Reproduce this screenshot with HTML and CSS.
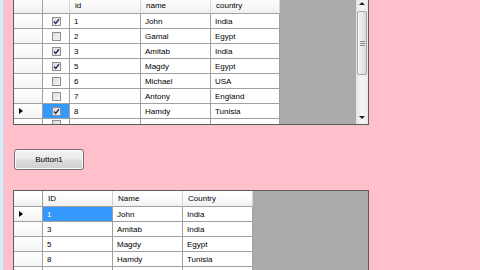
FILE: index.html
```html
<!DOCTYPE html>
<html>
<head>
<meta charset="utf-8">
<link rel="stylesheet" href="styles.css">
</head>
<body>
<div class="frame">
  <div class="content">
    <div class="dgv top">
      <div class="dgv-body">
        <div class="row hdr">
          <div class="c rh"></div><div class="c chk"></div><div class="c w-id">id</div><div class="c w-name">name</div><div class="c w-country">country</div>
        </div>
        <div class="row"><div class="c rh"></div><div class="c chk"><span class="cb on"><svg viewBox="0 0 9 9" width="9" height="9"><path d="M2 4.6 L3.7 6.4 L7 2.2" /></svg></span></div><div class="c w-id">1</div><div class="c w-name">John</div><div class="c w-country">India</div></div>
        <div class="row"><div class="c rh"></div><div class="c chk"><span class="cb"></span></div><div class="c w-id">2</div><div class="c w-name">Gamal</div><div class="c w-country">Egypt</div></div>
        <div class="row"><div class="c rh"></div><div class="c chk"><span class="cb on"><svg viewBox="0 0 9 9" width="9" height="9"><path d="M2 4.6 L3.7 6.4 L7 2.2" /></svg></span></div><div class="c w-id">3</div><div class="c w-name">Amitab</div><div class="c w-country">India</div></div>
        <div class="row"><div class="c rh"></div><div class="c chk"><span class="cb on"><svg viewBox="0 0 9 9" width="9" height="9"><path d="M2 4.6 L3.7 6.4 L7 2.2" /></svg></span></div><div class="c w-id">5</div><div class="c w-name">Magdy</div><div class="c w-country">Egypt</div></div>
        <div class="row"><div class="c rh"></div><div class="c chk"><span class="cb"></span></div><div class="c w-id">6</div><div class="c w-name">Michael</div><div class="c w-country">USA</div></div>
        <div class="row"><div class="c rh"></div><div class="c chk"><span class="cb"></span></div><div class="c w-id">7</div><div class="c w-name">Antony</div><div class="c w-country">England</div></div>
        <div class="row"><div class="c rh"><span class="arrow"></span></div><div class="c chk sel"><span class="cb on"><svg viewBox="0 0 9 9" width="9" height="9"><path d="M2 4.6 L3.7 6.4 L7 2.2" /></svg></span></div><div class="c w-id">8</div><div class="c w-name">Hamdy</div><div class="c w-country">Tunisia</div></div>
        <div class="row"><div class="c rh"></div><div class="c chk"><span class="cb"></span></div><div class="c w-id"></div><div class="c w-name"></div><div class="c w-country"></div></div>
      </div>
      <div class="vscroll">
        <div class="sb-btn"><span class="tri up"></span></div>
        <div class="sb-track">
          <div class="thumb"><span class="grip"></span></div>
        </div>
        <div class="sb-btn"><span class="tri down"></span></div>
      </div>
    </div>

    <button class="btn">Button1</button>

    <div class="dgv bottom">
      <div class="dgv-body">
        <div class="row hdr2">
          <div class="c rh"></div><div class="c w70">ID</div><div class="c w70">Name</div><div class="c w70">Country</div>
        </div>
        <div class="row"><div class="c rh"><span class="arrow"></span></div><div class="c w70 selcell">1</div><div class="c w70">John</div><div class="c w70">India</div></div>
        <div class="row"><div class="c rh"></div><div class="c w70">3</div><div class="c w70">Amitab</div><div class="c w70">India</div></div>
        <div class="row"><div class="c rh"></div><div class="c w70">5</div><div class="c w70">Magdy</div><div class="c w70">Egypt</div></div>
        <div class="row"><div class="c rh"></div><div class="c w70">8</div><div class="c w70">Hamdy</div><div class="c w70">Tunisia</div></div>
        <div class="row"><div class="c rh"></div><div class="c w70"></div><div class="c w70"></div><div class="c w70"></div></div>
      </div>
    </div>
  </div>
</div>
</body>
</html>
```

FILE: styles.css
```css
* { box-sizing: border-box; }
html, body {
  margin: 0;
  padding: 0;
  width: 480px;
  height: 270px;
  overflow: hidden;
}
body {
  font-family: "Liberation Sans", Arial, sans-serif;
  font-size: 8px;
  color: #000;
  background: #ffc0cb;
}
.frame {
  height: 270px;
  overflow: hidden;
  border-left: 3px solid #dde8f4;
  box-shadow: inset 1px 0 0 #c9d6e6;
  background: #ffc0cb;
}
.content {
  display: flex;
  flex-direction: column;
  align-items: flex-start;
  padding-left: 10px;
}
.dgv {
  display: flex;
  width: 356px;
  border: 1px solid #5a5a5a;
  background: #ababab;
  overflow: hidden;
}
.dgv.top {
  margin-top: -8px;
  height: 133px;
}
.dgv.bottom {
  margin-top: 20px;
  height: 80px;
  border-bottom: 0;
}
.dgv-body {
  flex: 1;
  display: flex;
  flex-direction: column;
  overflow: hidden;
}
.row {
  display: flex;
  height: 15px;
  flex: none;
}
.row.hdr { height: 21px; }
.row.hdr2 { height: 16px; }
.c {
  flex: none;
  height: 100%;
  border-right: 1px solid #a0a0a0;
  border-bottom: 1px solid #a0a0a0;
  background: #fff;
  display: flex;
  align-items: center;
  padding-left: 4px;
  white-space: nowrap;
  overflow: hidden;
}
.rh {
  width: 29px;
  background: linear-gradient(#ffffff, #f4f4f4);
  padding-left: 5px;
}
.chk {
  width: 27px;
  justify-content: center;
  padding-left: 0;
}
.w-id { width: 71px; }
.w-name { width: 70px; }
.w-country { width: 69px; }
.w70 { width: 70px; }

.hdr .c, .hdr2 .c {
  background: linear-gradient(#ffffff 0%, #fbfbfc 50%, #f0f0f2 100%);
  border-right-color: #d5d5d5;
  border-bottom-color: #a0a0a0;
}
.hdr .c {
  align-items: flex-end;
  padding-bottom: 3px;
  padding-left: 5px;
}
.hdr2 .c { padding-left: 5px; }
.hdr .c.rh, .hdr2 .c.rh { border-right-color: #a0a0a0; }

.sel { background: #3399ff; }
.selcell { background: #3399ff; color: #fff; }

.cb {
  display: block;
  width: 9px;
  height: 9px;
  border: 1px solid #8f8f8f;
  background: linear-gradient(135deg, #dcdcdc, #f8f8f8);
  position: relative;
}
.cb svg {
  position: absolute;
  left: -1px;
  top: -1px;
}
.cb svg path {
  fill: none;
  stroke: #1d2e5a;
  stroke-width: 1.4;
}
.row:last-child .chk { align-items: flex-start; padding-top: 1px; }

.arrow {
  display: block;
  width: 0;
  height: 0;
  border-left: 4px solid #000;
  border-top: 3.5px solid transparent;
  border-bottom: 3.5px solid transparent;
}

.vscroll {
  width: 12px;
  flex: none;
  display: flex;
  flex-direction: column;
  background: linear-gradient(90deg, #e3e3e3, #f4f4f4 40%, #f4f4f4 70%, #e8e8e8);
}
.sb-btn {
  height: 17px;
  flex: none;
  display: flex;
  align-items: flex-end;
  justify-content: center;
  padding-bottom: 5px;
}
.sb-btn:last-child {
  height: 13px;
  align-items: flex-start;
  padding-bottom: 0;
  padding-top: 5px;
}
.sb-track {
  flex: 1;
  padding: 1px 1px 0 1px;
}
.thumb {
  height: 64px;
  border: 1px solid #a5a5a5;
  border-radius: 2px;
  background: linear-gradient(90deg, #f4f4f4, #e9e9e9 50%, #d8d8d8);
  display: flex;
  align-items: center;
  justify-content: center;
}
.grip {
  display: block;
  width: 5px;
  height: 5px;
  background: repeating-linear-gradient(#8a8a8a 0 1px, transparent 1px 2px);
}
.tri {
  display: block;
  width: 0;
  height: 0;
  border-left: 3px solid transparent;
  border-right: 3px solid transparent;
}
.tri.up { border-bottom: 3px solid #222; }
.tri.down { border-top: 3px solid #222; }

.btn {
  margin: 24px 0 0 1px;
  width: 70px;
  height: 21px;
  padding: 0;
  font-family: "Liberation Sans", Arial, sans-serif;
  font-size: 8px;
  color: #000;
  border: 1px solid #707070;
  border-radius: 3px;
  background: linear-gradient(#f2f2f2 0%, #ebebeb 48%, #dddddd 52%, #cfcfcf 100%);
  box-shadow: inset 0 0 0 1px #fcfcfc;
}
```
